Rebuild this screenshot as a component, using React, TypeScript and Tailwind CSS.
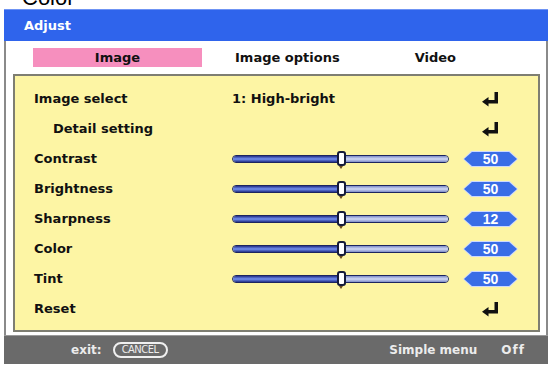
import React from "react";

function ReturnIcon() {
  return (
    <svg width="17" height="15" viewBox="0 0 17 15">
      <path d="M12.5 0h3.5v11.5H6.5v3L0 9.75 6.5 5v3H12.5z" fill="#111" />
    </svg>
  );
}

function Slider() {
  return (
    <div className="relative h-[16px] w-[217px] flex items-center">
      <div className="flex h-[8px] w-full rounded-full border border-[#1c2560] overflow-hidden">
        <div className="w-[108px] bg-[linear-gradient(#24318a,#7391f0_50%,#24318a)]" />
        <div className="flex-1 bg-[linear-gradient(#7e8cc8,#d2daf6_50%,#7e8cc8)]" />
      </div>
      <div className="absolute left-[105px] top-[0px] h-[15px] w-[9px] rounded-[3px] border-2 border-[#141a3a] bg-white" />
      <div className="absolute left-[107px] top-[15px] h-0 w-0 border-x-[2px] border-x-transparent border-t-[3px] border-t-[#6a4a20]" />
    </div>
  );
}

function Badge({ v }: { v: string }) {
  return (
    <div className="w-[55px] h-[16px] bg-[#cdd9ff] p-[1px] [clip-path:polygon(15%_0,85%_0,100%_50%,85%_100%,15%_100%,0_50%)]">
      <div className="h-full w-full bg-[#3a6de6] [clip-path:polygon(15%_0,85%_0,100%_50%,85%_100%,15%_100%,0_50%)] flex items-center justify-center text-white text-[14px] font-bold leading-none font-['Liberation_Sans',sans-serif]">
        {v}
      </div>
    </div>
  );
}

function Row({
  label,
  indent,
  children,
  right,
}: {
  label: string;
  indent?: boolean;
  children?: React.ReactNode;
  right?: React.ReactNode;
}) {
  return (
    <div className="flex items-center h-[30px]">
      <div className={"w-[198px] " + (indent ? "pl-[19px]" : "")}>{label}</div>
      <div className="w-[218px]">{children}</div>
      <div className="ml-[13px] w-[55px] flex justify-center">{right}</div>
    </div>
  );
}

export default function App() {
  const sliders: [string, string][] = [
    ["Contrast", "50"],
    ["Brightness", "50"],
    ["Sharpness", "12"],
    ["Color", "50"],
    ["Tint", "50"],
  ];
  return (
    <div className="w-[550px] h-[367px] bg-white overflow-hidden font-['DejaVu_Sans',sans-serif] text-[13px] font-bold text-[#111]">
      <div className="h-[9px] overflow-hidden pl-[22px]">
        <div className="mt-[-13px] text-[22px] leading-[22px] font-normal font-['Liberation_Sans',sans-serif] text-black">
          Color
        </div>
      </div>
      <div className="ml-[4px] w-[544px]">
        <div className="h-[32px] bg-[#2f64ec] border-t border-[#6f94f4] flex items-center pl-[20px] text-white">
          Adjust
        </div>
        <div className="border-x-2 border-[#8a8a8a] bg-white pb-[3px]">
          <div className="h-[33px] flex items-center">
            <div className="ml-[27px] w-[169px] h-[19px] bg-[#f68fbe] flex items-center justify-center">
              Image
            </div>
            <div className="ml-[33px]">Image options</div>
            <div className="ml-[75px]">Video</div>
          </div>
          <div className="ml-[7px] mr-[6px] border-2 border-[#7e7e72] bg-[#fdf5a4] pl-[19px] pt-[8px] pb-[6px]">
            <Row label="Image select" right={<ReturnIcon />}>
              <span>1: High-bright</span>
            </Row>
            <Row label="Detail setting" indent right={<ReturnIcon />} />
            {sliders.map(([l, v]) => (
              <Row key={l} label={l} right={<Badge v={v} />}>
                <Slider />
              </Row>
            ))}
            <Row label="Reset" right={<ReturnIcon />} />
          </div>
        </div>
        <div className="h-[29px] bg-[#6a6a6a] border-t border-[#9a9a9a] flex items-center text-[#ececec] text-[12px]">
          <span className="ml-[67px]">exit:</span>
          <span className="ml-[11px] h-[16px] w-[55px] rounded-full border-2 border-[#f0f0f0] flex items-center justify-center text-[11px] font-normal tracking-[-0.5px] font-['DejaVu_Sans_Condensed','DejaVu_Sans',sans-serif]">
            CANCEL
          </span>
          <span className="ml-auto">Simple menu</span>
          <span className="ml-[24px] mr-[23px] tracking-[1px]">Off</span>
        </div>
      </div>
    </div>
  );
}
